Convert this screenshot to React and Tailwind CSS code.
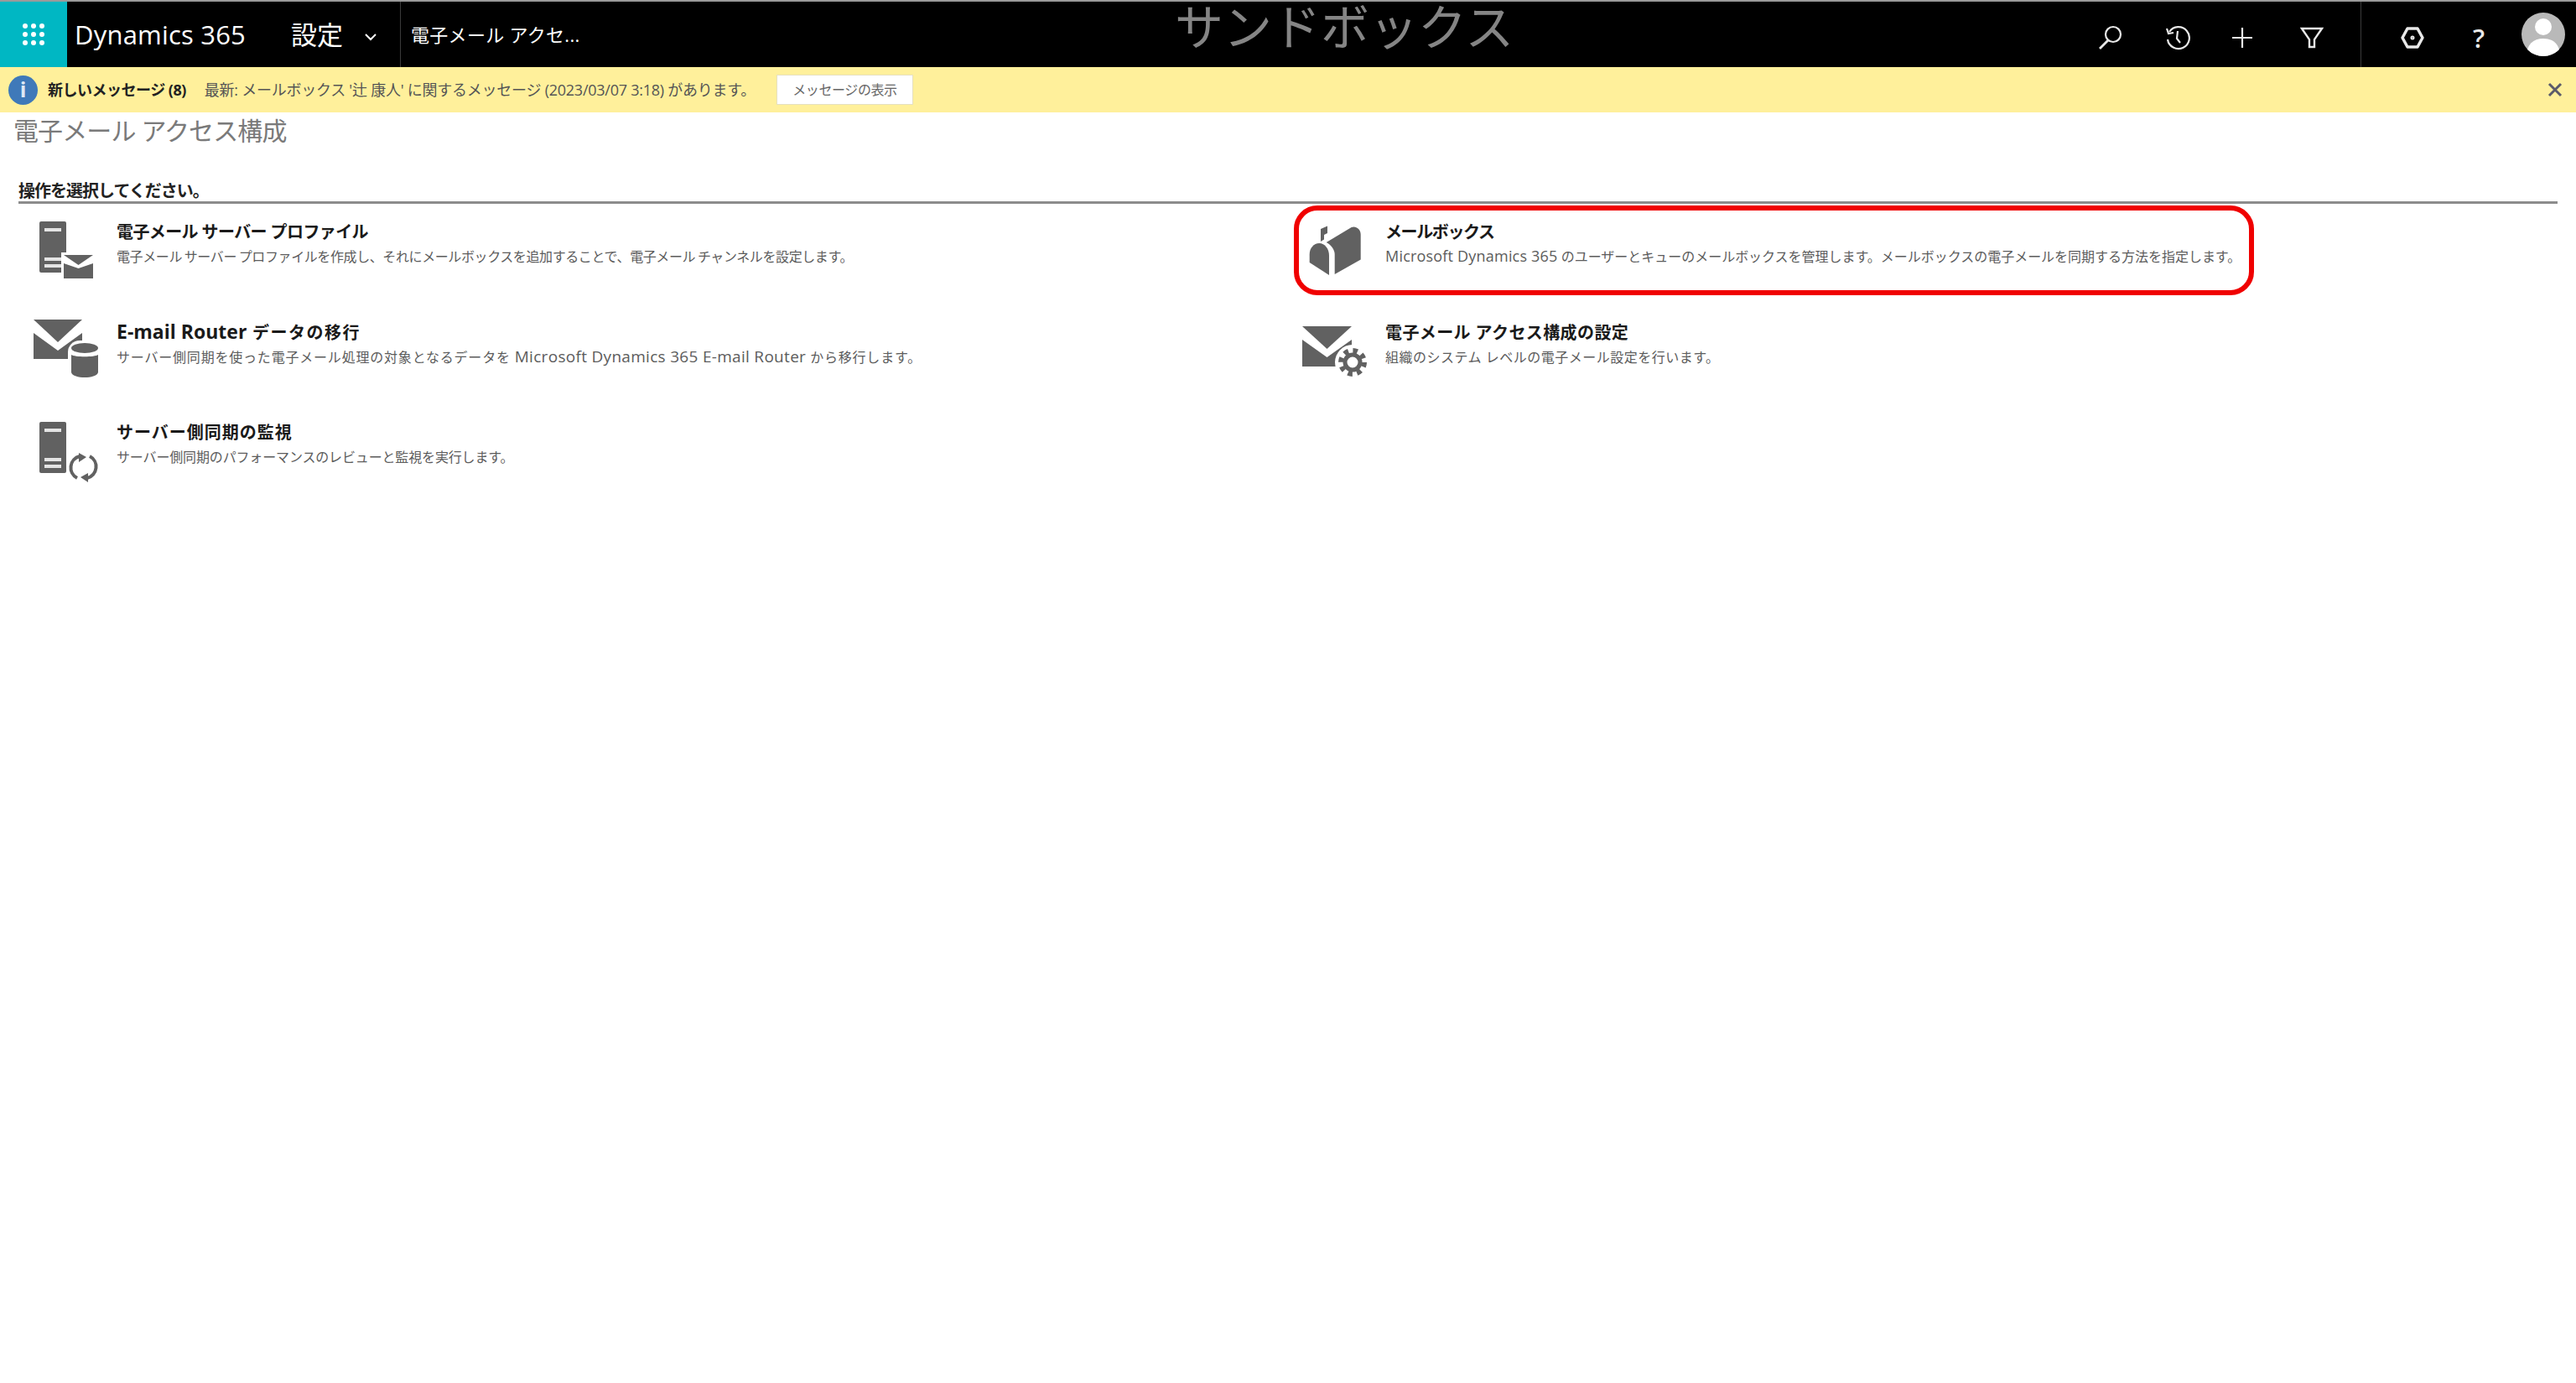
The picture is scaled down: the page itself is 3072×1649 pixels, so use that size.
const sans = "font-['Open_Sans','Noto_Sans_CJK_JP',sans-serif]";

function Latin({ children, bold, wide }) {
  if (bold) return <span className="text-[23px] leading-none tracking-[0px]">{children}</span>;
  return <span className={wide ? 'text-[19px] leading-none tracking-[0.3px]' : 'text-[18px] leading-none tracking-[0.2px]'}>{children}</span>;
}

const rows = [
  [
    {
      icon: 'server-mail',
      title: '電子メール サーバー プロファイル',
      titleClass: 'tracking-[-0.6px]',
      desc: '電子メール サーバー プロファイルを作成し、それにメールボックスを追加することで、電子メール チャンネルを設定します。',
      descClass: 'tracking-[-0.4px] [word-spacing:-1px]',
    },
    {
      icon: 'mailbox',
      title: 'メールボックス',
      titleClass: 'tracking-[-1.4px]',
      desc: <><Latin>Microsoft Dynamics 365</Latin> のユーザーとキューのメールボックスを管理します。メールボックスの電子メールを同期する方法を指定します。</>,
      descClass: 'tracking-[-0.02px]',
      marked: true,
    },
  ],
  [
    {
      icon: 'mail-db',
      title: <><Latin bold>E-mail Router</Latin> データの移行</>,
      titleClass: 'tracking-[1.5px]',
      desc: <>サーバー側同期を使った電子メール処理の対象となるデータを <Latin wide>Microsoft Dynamics 365 E-mail Router</Latin> から移行します。</>,
      descClass: 'tracking-[0.8px]',
    },
    {
      icon: 'mail-gear',
      title: '電子メール アクセス構成の設定',
      titleClass: 'tracking-[0.4px]',
      desc: '組織のシステム レベルの電子メール設定を行います。',
      descClass: 'tracking-[0.5px]',
    },
  ],
  [
    {
      icon: 'server-sync',
      title: 'サーバー側同期の監視',
      titleClass: 'tracking-[1px]',
      desc: 'サーバー側同期のパフォーマンスのレビューと監視を実行します。',
    },
    null,
  ],
];

function Server() {
  return (
    <>
      <rect x="7" y="0" width="32" height="61" rx="2" fill="#616161" />
      <rect x="13" y="8" width="20" height="4" fill="#e4e4e4" />
      <rect x="13" y="43" width="20" height="4" fill="#e4e4e4" />
      <rect x="13" y="51" width="20" height="4" fill="#e4e4e4" />
    </>
  );
}

function Envelope({ x, y, w, h, gap, apex }) {
  return (
    <>
      <path d={`M${x} ${y}H${x + w}L${x + w / 2} ${y + apex}Z`} fill="#616161" />
      <path d={`M${x} ${y + gap + 6}L${x + w / 2} ${y + apex + gap}L${x + w} ${y + gap + 6}V${y + h}H${x}Z`} fill="#616161" />
    </>
  );
}

function RowIcon({ name }) {
  return (
    <svg width="84" height="72" viewBox="0 0 84 72" className="shrink-0 overflow-visible">
      {name === 'server-mail' && (
        <>
          <Server />
          <rect x="33" y="37" width="40" height="34" fill="#fff" />
          <Envelope x={36} y={40} w={35} h={28} gap={4} apex={12} />
        </>
      )}
      {name === 'server-sync' && (
        <>
          <Server />
          <path d="M52 67A14 14 0 0 1 55 41" fill="none" stroke="#616161" strokeWidth="4" />
          <path d="M67 41A14 14 0 0 1 64 67" fill="none" stroke="#616161" strokeWidth="4" />
          <path d="M54 37l9 5-9 6zM65 61l-9 5 9 6z" fill="#616161" />
        </>
      )}
      {name === 'mail-db' && (
        <>
          <Envelope x={0} y={-3} w={58} h={47} gap={10} apex={27} />
          <rect x="41" y="22" width="40" height="46" rx="14" fill="#fff" />
          <ellipse cx="61" cy="31" rx="16" ry="6" fill="#616161" />
          <path d="M45 39c4 3 28 3 32 0v21c-2 8-30 8-32 0z" fill="#616161" />
        </>
      )}
      {name === 'mail-gear' && (
        <>
          <Envelope x={-2} y={5} w={59} h={48} gap={10} apex={27} />
          <circle cx="58" cy="48" r="21" fill="#fff" />
          <circle cx="58" cy="48" r="9" fill="none" stroke="#616161" strokeWidth="5" />
          <circle cx="58" cy="48" r="14" fill="none" stroke="#616161" strokeWidth="6" strokeDasharray="5.5 5.5" />
        </>
      )}
      {name === 'mailbox' && (
        <>
          <path d="M20 9l8-3.500V14l-4 2v5.500L20 24z" fill="#616161" />
          <path d="M26.700 25L56.700 7c5-2 11 2 11 8.500V45.500L36.700 63V39c0-5-4-11-10-14z" fill="#616161" />
          <path d="M6.700 39c0-7 5-13 11.600-13S30 33 30 40.500V64L6.700 49z" fill="#616161" />
        </>
      )}
    </svg>
  );
}

function Option({ item, second }) {
  return (
    <div className="relative flex h-[119.5px] items-start">
      {item.marked && <div className="absolute left-[6px] top-[2px] h-[107px] w-[1145px] rounded-[28px] border-[6px] border-[#f00000]" />}
      <div className={`flex shrink-0 pl-[18px] pt-[21px] ${second ? 'w-[115px]' : 'w-[117px]'}`}>
        <RowIcon name={item.icon} />
      </div>
      <div className="pt-[20px]">
        <div className={`text-[20px] font-bold leading-[28px] text-[#1a1a1a] ${item.titleClass || ''}`}>{item.title}</div>
        <div className={`text-[16px] leading-[30px] whitespace-nowrap text-[#5c5c5c] ${item.descClass || 'tracking-[-0.15px]'}`}>{item.desc}</div>
      </div>
    </div>
  );
}

export default function App() {
  return (
    <div className={`${sans} relative min-h-[1649px] bg-white`}>
      <header className="flex h-[80px] items-center border-t-2 border-[#9a9a9a] bg-black text-white">
        <div className="flex h-full w-[80px] items-center justify-center bg-[#00b7c3]">
          <div className="grid grid-cols-3 gap-[4px]">
            {Array.from({ length: 9 }).map((_, i) => (
              <span key={i} className="h-[6px] w-[6px] rounded-full bg-white" />
            ))}
          </div>
        </div>
        <div className="ml-[9px] w-[258px] text-[31px] tracking-[0.2px]">Dynamics 365</div>
        <div className="flex w-[130px] items-center text-[31px]">
          設定
          <svg width="16" height="10" viewBox="0 0 16 10" className="ml-[25px] mt-[6px]" fill="none" stroke="#fff" strokeWidth="2"><path d="M2 2l6 6 6-6" /></svg>
        </div>
        <div className="h-full w-px bg-[#3a3a3a]" />
        <div className="ml-[12px] text-[22px] tracking-[0.3px]">電子メール アクセ...</div>
        <div className="ml-auto flex h-full items-center">
          <div className="flex items-center pt-[8px] text-[#e8e8e8]">
            <svg width="30" height="30" viewBox="0 0 30 30" className="mr-[50px]" fill="none" stroke="currentColor" strokeWidth="2.2"><circle cx="18" cy="11" r="9" /><path d="M12 18L2 28" strokeWidth="2.8" /></svg>
            <svg width="30" height="30" viewBox="0 0 30 30" className="mr-[49px]" fill="none" stroke="currentColor" strokeWidth="2.2"><path d="M5 8a13 13 0 1 1-2 9" /><path d="M2 4l2 6 6-1" /><path d="M15 7l-1 9 4 5" /></svg>
            <svg width="26" height="26" viewBox="0 0 26 26" className="mr-[56px]" fill="none" stroke="currentColor" strokeWidth="2.2"><path d="M13 1v24M1 13h24" /></svg>
            <svg width="28" height="26" viewBox="0 0 28 26" fill="none" stroke="currentColor" strokeWidth="2.4"><path d="M2 2h24L17 15v9h-6v-9z" /></svg>
          </div>
          <div className="ml-[44px] h-full w-px bg-[#3a3a3a]" />
          <div className="flex items-center pt-[8px] text-[#e8e8e8]">
            <svg width="28" height="28" viewBox="0 0 28 28" className="ml-[47px]" fill="none" stroke="currentColor" strokeWidth="3.5" strokeLinejoin="round"><path d="M8 3h12l6 11-6 11H8L2 14z" /><circle cx="14" cy="14" r="1.500" strokeWidth="2" /></svg>
            <div className="ml-[50px] w-[30px] text-center text-[31px] font-semibold leading-none">?</div>
          </div>
          <div className="ml-[36px] mr-[13px] flex h-[52px] w-[52px] items-center justify-center overflow-hidden rounded-full bg-[#b9b9b9]">
            <svg width="52" height="52" viewBox="0 0 52 52" fill="#fff"><circle cx="26" cy="17" r="10" /><path d="M6 52c0-14 8-21 20-21s20 7 20 21z" /></svg>
          </div>
        </div>
      </header>

      <div className="flex h-[54px] items-center bg-[#fff09b] pl-[10px] text-[18px]">
        <div className="flex h-[35px] w-[35px] items-center justify-center rounded-full bg-[#3f79b9] text-[25px] font-bold text-[#dfe9f5]">i</div>
        <span className="ml-[12px] font-bold tracking-[-0.5px] text-[#222]">新しいメッセージ (8)</span>
        <span className="ml-[22px] tracking-[-0.25px] text-[#555]">最新: メールボックス '辻 康人' に関するメッセージ (2023/03/07 3:18) があります。</span>
        <button className="ml-[25px] h-[36px] w-[163px] border border-[#e6e0c0] bg-white text-[16px] tracking-[-0.4px] text-[#666]">メッセージの表示</button>
        <svg width="18" height="18" viewBox="0 0 18 18" className="ml-auto mr-[16px]" fill="none" stroke="#5a5a6a" strokeWidth="3"><path d="M2 2l14 14M16 2L2 16" /></svg>
      </div>

      <main className="px-[22px]">
        <h1 className="ml-[-6px] text-[30px] font-normal leading-[44px] tracking-[-0.9px] text-[#7a7a7a]">電子メール アクセス構成</h1>
        <div className="mt-[38px] w-[3028px] border-b-[3px] border-[#8c8c8c] text-[20px] font-bold leading-[24px] tracking-[-1px] text-[#222]">操作を選択してください。</div>
        <div className="w-[3028px]">
          {rows.map((row, i) => (
            <div key={i} className="grid grid-cols-[1515px_1fr]">
              <Option item={row[0]} />
              {row[1] ? <Option item={row[1]} second /> : <div />}
            </div>
          ))}
        </div>
      </main>

      <div className="pointer-events-none absolute left-[1401px] top-[4px] text-[58px] leading-[56px] text-[#858585]">サンドボックス</div>
    </div>
  );
}
